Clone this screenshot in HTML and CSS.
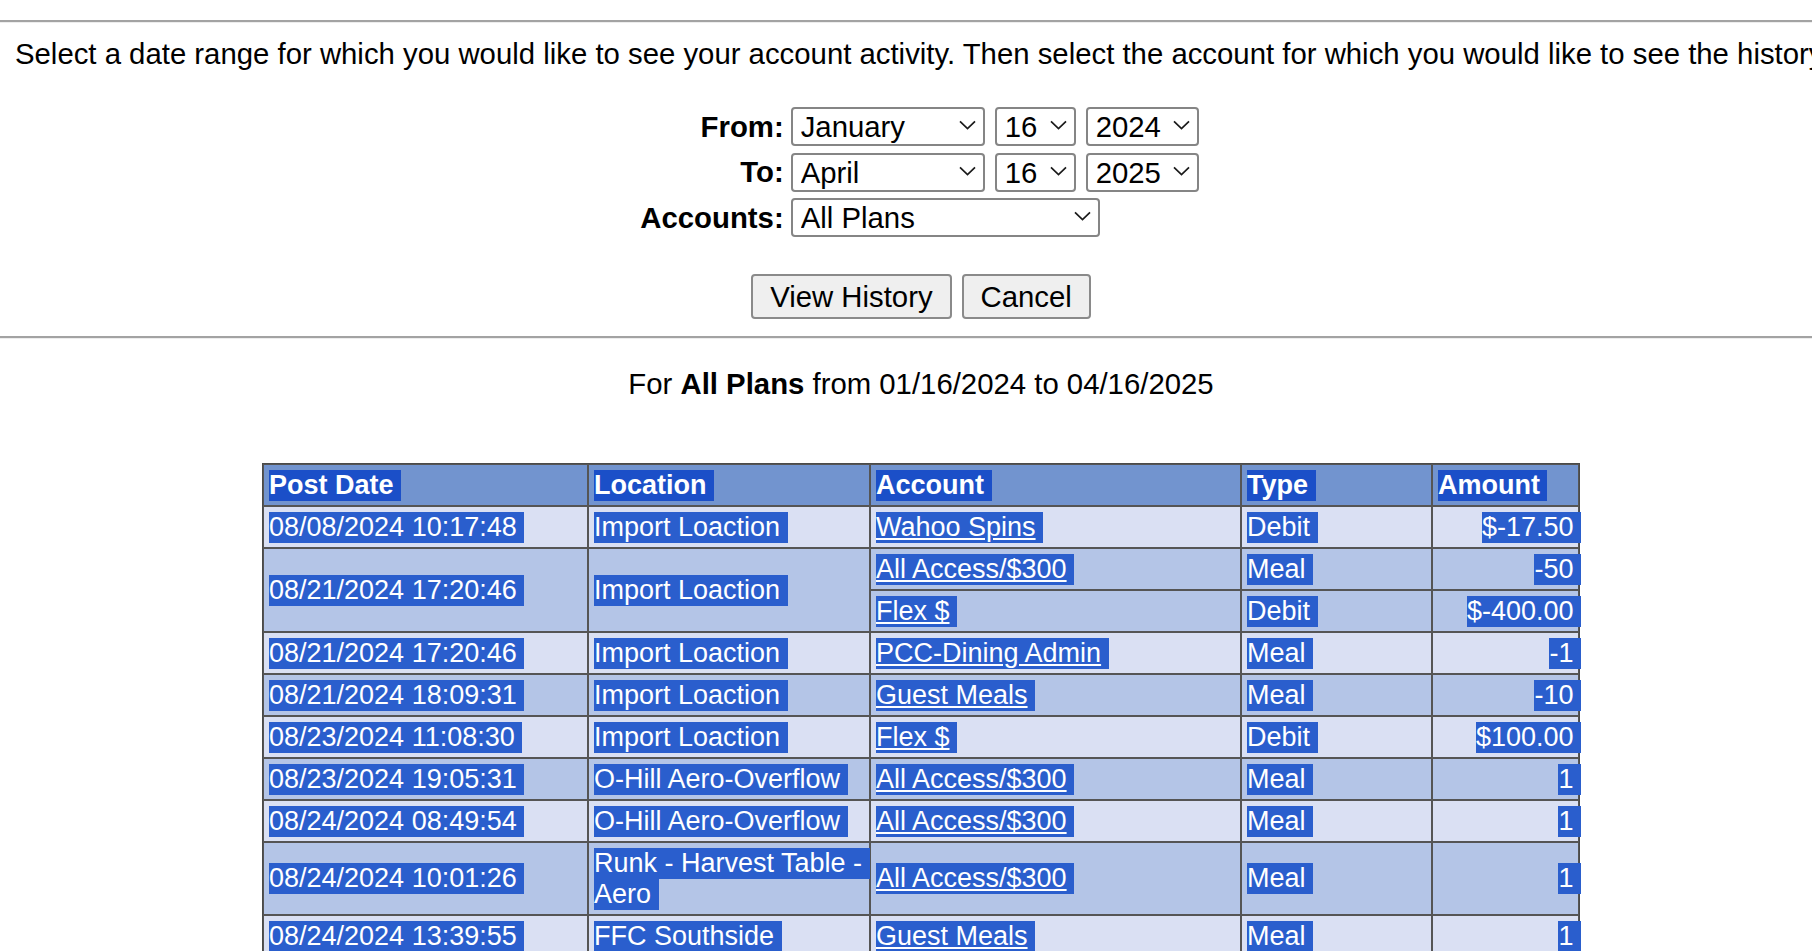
FILE: index.html
```html
<!DOCTYPE html>
<html lang="en">
<head>
<meta charset="utf-8">
<title>Account History</title>
<link rel="stylesheet" href="styles.css">
</head>
<body>
<div class="page">
  <hr class="rule">
  <p class="intro">Select a date range for which you would like to see your account activity. Then select the account for which you would like to see the history.</p>

  <form class="filter">
    <label class="filter-label">From:</label>
    <div class="controls">
      <span class="select-wrap"><select class="ctl w-month"><option selected>January</option><option>February</option><option>March</option><option>April</option></select><svg class="chev" viewBox="0 0 17 10"><path d="M1 1.3 L8.5 8.6 L16 1.3"/></svg></span>
      <span class="select-wrap"><select class="ctl w-day"><option selected>16</option><option>17</option></select><svg class="chev" viewBox="0 0 17 10"><path d="M1 1.3 L8.5 8.6 L16 1.3"/></svg></span>
      <span class="select-wrap"><select class="ctl w-year"><option selected>2024</option><option>2025</option></select><svg class="chev" viewBox="0 0 17 10"><path d="M1 1.3 L8.5 8.6 L16 1.3"/></svg></span>
    </div>

    <label class="filter-label">To:</label>
    <div class="controls">
      <span class="select-wrap"><select class="ctl w-month"><option>January</option><option>February</option><option>March</option><option selected>April</option></select><svg class="chev" viewBox="0 0 17 10"><path d="M1 1.3 L8.5 8.6 L16 1.3"/></svg></span>
      <span class="select-wrap"><select class="ctl w-day"><option selected>16</option><option>17</option></select><svg class="chev" viewBox="0 0 17 10"><path d="M1 1.3 L8.5 8.6 L16 1.3"/></svg></span>
      <span class="select-wrap"><select class="ctl w-year"><option>2024</option><option selected>2025</option></select><svg class="chev" viewBox="0 0 17 10"><path d="M1 1.3 L8.5 8.6 L16 1.3"/></svg></span>
    </div>

    <label class="filter-label">Accounts:</label>
    <div class="controls">
      <span class="select-wrap"><select class="ctl w-acct"><option selected>All Plans</option><option>All Access/$300</option><option>Flex $</option></select><svg class="chev" viewBox="0 0 17 10"><path d="M1 1.3 L8.5 8.6 L16 1.3"/></svg></span>
    </div>
  </form>

  <div class="actions">
    <button type="button" class="btn">View History</button>
    <button type="button" class="btn">Cancel</button>
  </div>

  <hr class="rule rule-bottom">

  <p class="caption">For <b>All Plans</b> from 01/16/2024 to 04/16/2025</p>

  <table class="history">
    <thead>
      <tr>
        <th class="c-date"><span class="hl">Post Date</span></th>
        <th class="c-loc"><span class="hl">Location</span></th>
        <th class="c-acct"><span class="hl">Account</span></th>
        <th class="c-type"><span class="hl">Type</span></th>
        <th class="c-amt"><span class="hl">Amount</span></th>
      </tr>
    </thead>
    <tbody>
      <tr class="light">
        <td><span class="hl">08/08/2024 10:17:48</span></td>
        <td><span class="hl">Import Loaction</span></td>
        <td><span class="hl"><a href="#">Wahoo Spins</a></span></td>
        <td><span class="hl">Debit</span></td>
        <td class="amt"><span class="hl">$-17.50</span></td>
      </tr>
      <tr class="dark">
        <td rowspan="2"><span class="hl">08/21/2024 17:20:46</span></td>
        <td rowspan="2"><span class="hl">Import Loaction</span></td>
        <td><span class="hl"><a href="#">All Access/$300</a></span></td>
        <td><span class="hl">Meal</span></td>
        <td class="amt"><span class="hl">-50</span></td>
      </tr>
      <tr class="dark">
        <td><span class="hl"><a href="#">Flex $</a></span></td>
        <td><span class="hl">Debit</span></td>
        <td class="amt"><span class="hl">$-400.00</span></td>
      </tr>
      <tr class="light">
        <td><span class="hl">08/21/2024 17:20:46</span></td>
        <td><span class="hl">Import Loaction</span></td>
        <td><span class="hl"><a href="#">PCC-Dining Admin</a></span></td>
        <td><span class="hl">Meal</span></td>
        <td class="amt"><span class="hl">-1</span></td>
      </tr>
      <tr class="dark">
        <td><span class="hl">08/21/2024 18:09:31</span></td>
        <td><span class="hl">Import Loaction</span></td>
        <td><span class="hl"><a href="#">Guest Meals</a></span></td>
        <td><span class="hl">Meal</span></td>
        <td class="amt"><span class="hl">-10</span></td>
      </tr>
      <tr class="light">
        <td><span class="hl">08/23/2024 11:08:30</span></td>
        <td><span class="hl">Import Loaction</span></td>
        <td><span class="hl"><a href="#">Flex $</a></span></td>
        <td><span class="hl">Debit</span></td>
        <td class="amt"><span class="hl">$100.00</span></td>
      </tr>
      <tr class="dark">
        <td><span class="hl">08/23/2024 19:05:31</span></td>
        <td><span class="hl">O-Hill Aero-Overflow</span></td>
        <td><span class="hl"><a href="#">All Access/$300</a></span></td>
        <td><span class="hl">Meal</span></td>
        <td class="amt"><span class="hl">1</span></td>
      </tr>
      <tr class="light">
        <td><span class="hl">08/24/2024 08:49:54</span></td>
        <td><span class="hl">O-Hill Aero-Overflow</span></td>
        <td><span class="hl"><a href="#">All Access/$300</a></span></td>
        <td><span class="hl">Meal</span></td>
        <td class="amt"><span class="hl">1</span></td>
      </tr>
      <tr class="dark">
        <td><span class="hl">08/24/2024 10:01:26</span></td>
        <td><span class="hl hl-fill">Runk - Harvest Table -</span><span class="hl">Aero</span></td>
        <td><span class="hl"><a href="#">All Access/$300</a></span></td>
        <td><span class="hl">Meal</span></td>
        <td class="amt"><span class="hl">1</span></td>
      </tr>
      <tr class="light">
        <td><span class="hl">08/24/2024 13:39:55</span></td>
        <td><span class="hl">FFC Southside</span></td>
        <td><span class="hl"><a href="#">Guest Meals</a></span></td>
        <td><span class="hl">Meal</span></td>
        <td class="amt"><span class="hl">1</span></td>
      </tr>
      <tr class="dark">
        <td><span class="hl">08/25/2024 12:14:07</span></td>
        <td><span class="hl">FFC Southside</span></td>
        <td><span class="hl"><a href="#">All Access/$300</a></span></td>
        <td><span class="hl">Meal</span></td>
        <td class="amt"><span class="hl">1</span></td>
      </tr>
    </tbody>
  </table>
</div>
</body>
</html>
```
FILE: styles.css
```css
html, body {
  margin: 0;
  padding: 0;
  overflow: hidden;
  background: #ffffff;
}

body {
  font-family: "Liberation Sans", Arial, sans-serif;
  font-size: 29.33px;
  color: #000000;
}

.page {
  width: 1842px;
  padding-top: 20px;
}

.rule {
  height: 0;
  margin: 0;
  border: 0;
  border-top: 2px solid #a3a3a3;
  border-bottom: 1px solid #ededed;
}

.rule-bottom {
  margin-top: 17px;
}

.intro {
  margin: 14px 0 0;
  padding-left: 15px;
  line-height: 34px;
  white-space: nowrap;
}

/* ---------- filter form ---------- */
.filter {
  display: grid;
  grid-template-columns: auto auto;
  column-gap: 7px;
  row-gap: 6.5px;
  justify-content: center;
  align-items: center;
  margin: 36px 0 0;
  padding-right: 3px;
}

.filter-label {
  font-weight: bold;
  text-align: right;
  line-height: 34px;
}

.controls {
  display: flex;
  gap: 10px;
}

.select-wrap {
  position: relative;
  display: block;
}

.ctl {
  -webkit-appearance: none;
  appearance: none;
  box-sizing: border-box;
  height: 39px;
  margin: 0;
  padding: 0 0 0 8px;
  font-family: inherit;
  font-size: 29.33px;
  color: #000000;
  background: #ffffff;
  border: 2px solid #858585;
  border-radius: 4px;
}

.w-month { width: 194px; }
.w-day { width: 81px; }
.w-year { width: 113px; }
.w-acct { width: 309px; }

.chev {
  position: absolute;
  right: 9px;
  top: 13px;
  width: 17px;
  height: 10px;
  pointer-events: none;
}

.chev path {
  fill: none;
  stroke: #1a1a1a;
  stroke-width: 1.7;
}

/* ---------- buttons ---------- */
.actions {
  display: flex;
  justify-content: center;
  gap: 10px;
  margin-top: 37px;
}

.btn {
  box-sizing: border-box;
  height: 45px;
  margin: 0;
  padding: 0 17px;
  font-family: inherit;
  font-size: 29.33px;
  color: #000000;
  background: #efefef;
  border: 2px solid #8a8a8a;
  border-radius: 4px;
}

/* ---------- caption ---------- */
.caption {
  margin: 28px 0 0;
  text-align: center;
  line-height: 34px;
}

/* ---------- history table ---------- */
.history {
  margin: 62px auto 0;
  width: 1318px;
  table-layout: fixed;
  border-collapse: separate;
  border-spacing: 0;
  border: 1px solid #4a4a4a;
  font-size: 27px;
  color: #ffffff;
}

.history th,
.history td {
  box-sizing: border-box;
  border: 1px solid #555555;
  padding: 4.5px 0 4.5px 5px;
  line-height: 31px;
  text-align: left;
  vertical-align: middle;
  white-space: nowrap;
}

.history thead th {
  background: #7294cf;
  font-weight: bold;
}

.c-date { width: 325px; }
.c-loc { width: 282px; }
.c-acct { width: 371px; }
.c-type { width: 191px; }
.c-amt { width: 147px; }

.history tr.light td { background: #dae0f3; }
.history tr.dark td { background: #b4c5e7; }

.hl {
  display: inline-block;
  vertical-align: top;
  line-height: 31px;
  padding-right: 7.5px;
  background: #2a5ecd;
  color: #ffffff;
}

.history thead .hl {
  background: #1b4fc8;
}

.hl a {
  color: #ffffff;
  text-decoration: underline;
}

.hl-fill {
  display: block;
  margin-right: -1px;
}

.history td.amt {
  text-align: right;
  padding-right: 0;
}

.history td.amt .hl {
  margin-right: -3px;
}
```
